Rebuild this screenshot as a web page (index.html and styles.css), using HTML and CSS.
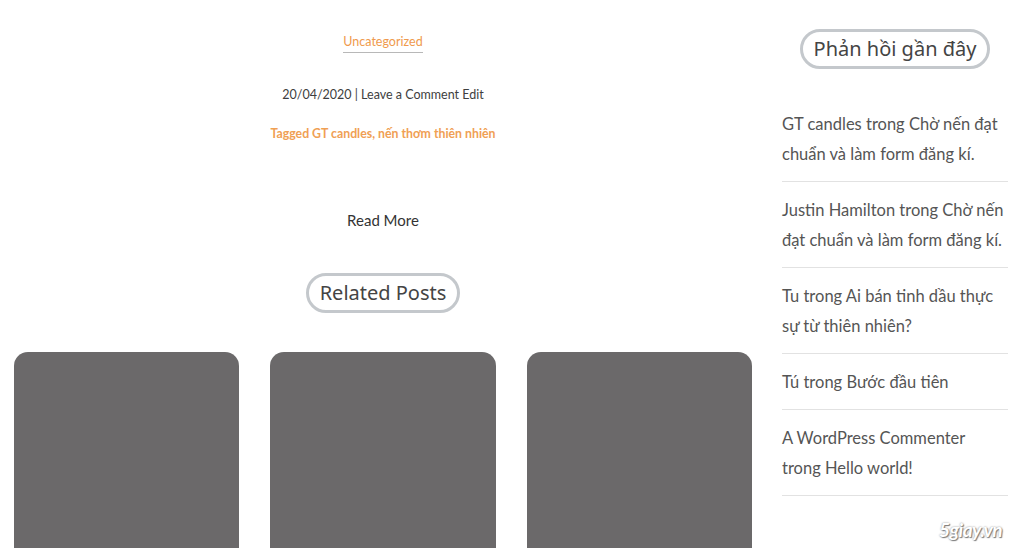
FILE: index.html
```html
<!DOCTYPE html>
<html lang="vi">
<head>
    <meta charset="UTF-8">
    <meta name="viewport" content="width=device-width, initial-scale=1.0">
    <title>Chờ nến đạt chuẩn và làm form đăng kí</title>
    <link rel="stylesheet" href="styles.css">
</head>
<body>
    <div class="page">
        <!-- Post footer and related posts -->
        <main class="main">
            <div class="post-footer">
                <a class="cat-link" href="#">Uncategorized</a>
                <p class="meta">20/04/2020 | Leave a Comment Edit</p>
                <p class="tags">Tagged GT candles, nến thơm thiên nhiên</p>
                <a class="read-more" href="#">Read More</a>
            </div>

            <h2 class="pill-title">Related Posts</h2>
            <div class="related">
                <div class="related-card"></div>
                <div class="related-card"></div>
                <div class="related-card"></div>
            </div>
        </main>

        <!-- Sidebar: recent comments widget -->
        <aside class="sidebar">
            <h2 class="pill-title">Phản hồi gần đây</h2>
            <ul class="comments">
                <li>GT candles trong Chờ nến đạt chuẩn và làm form đăng kí.</li>
                <li>Justin Hamilton trong Chờ nến đạt chuẩn và làm form đăng kí.</li>
                <li>Tu trong Ai bán tinh dầu thực sự từ thiên nhiên?</li>
                <li>Tú trong Bước đầu tiên</li>
                <li>A WordPress Commenter trong Hello world!</li>
            </ul>
            <div class="watermark">5giay.vn</div>
        </aside>
    </div>
</body>
</html>
```

FILE: styles.css
```css
body {
    margin: 0;
    font-family: Lato, "Noto Sans", sans-serif;
    color: #444;
    background: #fff;
}
.page {
    display: flex;
    height: 548px;
    overflow: hidden;
}
.main {
    width: 738px;
    margin-left: 14px;
    display: flex;
    flex-direction: column;
    align-items: center;
}
.post-footer {
    display: flex;
    flex-direction: column;
    align-items: center;
    padding-top: 33px;
}
.cat-link {
    color: #ef9a4c;
    font-size: 12.5px;
    line-height: 18px;
    text-decoration: none;
    border-bottom: 1px solid #b8b8b8;
    padding-bottom: 1px;
}
.meta {
    margin: 32px 0 0;
    font-size: 12.5px;
    line-height: 20px;
    color: #3e3e3e;
}
.tags {
    margin: 19px 0 0;
    font-size: 12.3px;
    line-height: 20px;
    font-weight: bold;
    color: #f0a054;
}
.read-more {
    margin-top: 65px;
    font-size: 15px;
    line-height: 22px;
    color: #333;
    text-decoration: none;
}
.pill-title {
    margin: 0;
    padding: 0 11px;
    height: 34px;
    line-height: 34px;
    border: 3px solid #c4c8cc;
    border-radius: 20px;
    font-family: "Noto Sans", sans-serif;
    font-weight: normal;
    font-size: 20px;
    color: #444;
}
.main .pill-title {
    margin-top: 42px;
}
.related {
    margin-top: 39px;
    width: 100%;
    display: grid;
    grid-template-columns: repeat(3, 1fr);
    gap: 31px;
}
.related-card {
    height: 220px;
    background: #6b696a;
    border-radius: 14px;
}
.sidebar {
    width: 226px;
    margin-left: 30px;
    display: flex;
    flex-direction: column;
    align-items: center;
    padding-top: 29px;
    position: relative;
}
.comments {
    list-style: none;
    margin: 27px 0 0;
    padding: 0;
    width: 100%;
}
.comments li {
    padding: 13px 3px 12px 0;
    border-bottom: 1px solid #e2e2e2;
    font-size: 16.5px;
    line-height: 30px;
    color: #555;
}
.watermark {
    position: absolute;
    right: 6px;
    top: 518px;
    font-size: 19px;
    font-weight: bold;
    font-style: italic;
    letter-spacing: -0.5px;
    color: #fff;
    text-shadow: 0 0 2px #888, 1px 1px 1px #777;
}
```
